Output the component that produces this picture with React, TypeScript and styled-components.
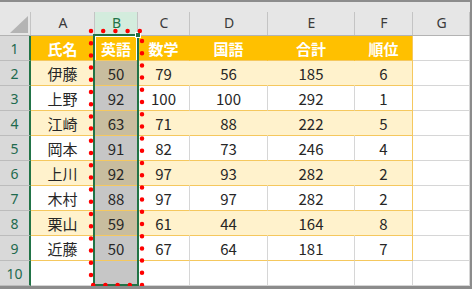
import React from 'react';
import styled, { createGlobalStyle, css } from 'styled-components';

const GREEN = '#217346';
const ORANGE = '#ffc000';
const BAND = '#fff2cc';
const TLINE = '#f5c85e';
const GRID = '#d6d6d6';

const Global = createGlobalStyle`
  html, body { margin: 0; padding: 0; background: #fff; }
  body { font-family: "Noto Sans CJK JP", "Noto Sans", sans-serif; }
`;

const Frame = styled.div`
  position: relative;
  width: 472px;
  height: 289px;
  box-sizing: border-box;
  border-top: 2px solid #8c8c8c;
  border-right: 2px solid #8c8c8c;
  border-bottom: 3px solid #8c8c8c;
  background: #fff;
  overflow: hidden;
`;

const Sheet = styled.div`
  display: grid;
  grid-template-columns: 31px 64px 43px 52px 78px 87px 58px 57px;
  grid-template-rows: 34px repeat(10, 25px);
`;

const headBase = css`
  position: relative;
  box-sizing: border-box;
  background: #e6e6e6;
  border-bottom: 1px solid #b3b3b3;
  &::after {
    content: '';
    position: absolute;
    right: 0;
    top: 10px;
    bottom: 0;
    width: 1px;
    background: #c4c4c4;
  }
`;

const Corner = styled.div`
  ${headBase}
  display: flex;
  align-items: flex-end;
  justify-content: flex-end;
  padding: 0 3px 2px 0;
`;

const ColHead = styled.div<{ $sel?: boolean }>`
  ${headBase}
  display: flex;
  align-items: flex-end;
  justify-content: center;
  padding-bottom: 3px;
  font-family: "Noto Sans", sans-serif;
  font-size: 14px;
  line-height: 18px;
  color: #3a3a3a;
  ${(p) =>
    p.$sel &&
    css`
      background: linear-gradient(to bottom, #e6e6e6 10px, #d3ecdd 10px);
      border-bottom: 2px solid ${GREEN};
      padding-bottom: 2px;
      color: ${GREEN};
    `}
`;

const RowHead = styled.div`
  box-sizing: border-box;
  background: #d9d9d9;
  border-bottom: 1px solid #bcbcbc;
  border-right: 2px solid ${GREEN};
  display: flex;
  align-items: center;
  justify-content: center;
  font-family: "Noto Sans", sans-serif;
  font-size: 14px;
  color: #1e6a4e;
`;

type Tone = 'head' | 'band' | 'plain';

const Cell = styled.div<{
  $tone: Tone;
  $sel?: boolean;
  $table?: boolean;
  $edge?: boolean;
  $active?: boolean;
}>`
  box-sizing: border-box;
  display: flex;
  align-items: center;
  justify-content: center;
  font-size: 15px;
  color: #262626;
  background: ${(p) =>
    p.$tone === 'head'
      ? ORANGE
      : p.$sel
      ? p.$tone === 'band'
        ? '#c8bd9f'
        : '#c6c6c6'
      : p.$tone === 'band'
      ? BAND
      : '#fff'};
  border-bottom: 1px solid ${(p) => (p.$table ? TLINE : GRID)};
  border-right: 1px solid
    ${(p) =>
      p.$edge
        ? TLINE
        : p.$tone === 'head'
        ? ORANGE
        : p.$tone === 'band'
        ? BAND
        : GRID};
  ${(p) =>
    p.$tone === 'head' &&
    css`
      color: #fff;
      font-weight: 700;
    `}
  ${(p) =>
    p.$active &&
    css`
      box-shadow: inset 1px 1px 0 #fff, inset -1px 0 0 #fff;
    `}
`;

const SelBox = styled.div`
  position: absolute;
  left: 93px;
  top: 32px;
  width: 46px;
  height: 252px;
  box-sizing: border-box;
  border: 2px solid ${GREEN};
  pointer-events: none;
`;

const Handle = styled.div`
  position: absolute;
  left: 135px;
  top: 30px;
  width: 6px;
  height: 6px;
  box-sizing: border-box;
  background: ${GREEN};
  border: 1px solid #fff;
`;

const Dots = styled.svg`
  position: absolute;
  left: 85px;
  top: 23px;
  overflow: visible;
  pointer-events: none;
`;

const cols = ['A', 'B', 'C', 'D', 'E', 'F', 'G'];
const header = ['氏名', '英語', '数学', '国語', '合計', '順位'];
const data: (string | number)[][] = [
  ['伊藤', 50, 79, 56, 185, 6],
  ['上野', 92, 100, 100, 292, 1],
  ['江崎', 63, 71, 88, 222, 5],
  ['岡本', 91, 82, 73, 246, 4],
  ['上川', 92, 97, 93, 282, 2],
  ['木村', 88, 97, 97, 282, 2],
  ['栗山', 59, 61, 44, 164, 8],
  ['近藤', 50, 67, 64, 181, 7],
];

export default function App() {
  const rows: React.ReactNode[] = [];
  for (let r = 1; r <= 10; r++) {
    rows.push(<RowHead key={`h${r}`}>{r}</RowHead>);
    for (let c = 0; c < 7; c++) {
      const inTable = r <= 9 && c <= 5;
      let tone: Tone = 'plain';
      let text: string | number = '';
      if (inTable) {
        if (r === 1) {
          tone = 'head';
          text = header[c];
        } else {
          tone = r % 2 === 0 ? 'band' : 'plain';
          text = data[r - 2][c];
        }
      }
      rows.push(
        <Cell
          key={`${r}-${c}`}
          $tone={tone}
          $sel={c === 1}
          $table={inTable}
          $edge={inTable && c === 5}
          $active={r === 1 && c === 1}
        >
          {text}
        </Cell>
      );
    }
  }

  return (
    <>
      <Global />
      <Frame>
        <Sheet>
          <Corner>
            <svg width="18" height="17" viewBox="0 0 18 17">
              <polygon points="18,0 18,17 0,17" fill="#b4b4b4" />
            </svg>
          </Corner>
          {cols.map((c) => (
            <ColHead key={c} $sel={c === 'B'}>
              {c}
            </ColHead>
          ))}
          {rows}
        </Sheet>
        <SelBox />
        <Handle />
        <Dots width="64" height="268" viewBox="0 0 64 268">
          <rect
            x="6"
            y="6"
            width="51"
            height="254"
            fill="none"
            stroke="#ff0000"
            strokeWidth="4.5"
            strokeLinecap="round"
            strokeDasharray="0 12.2"
          />
        </Dots>
      </Frame>
    </>
  );
}
